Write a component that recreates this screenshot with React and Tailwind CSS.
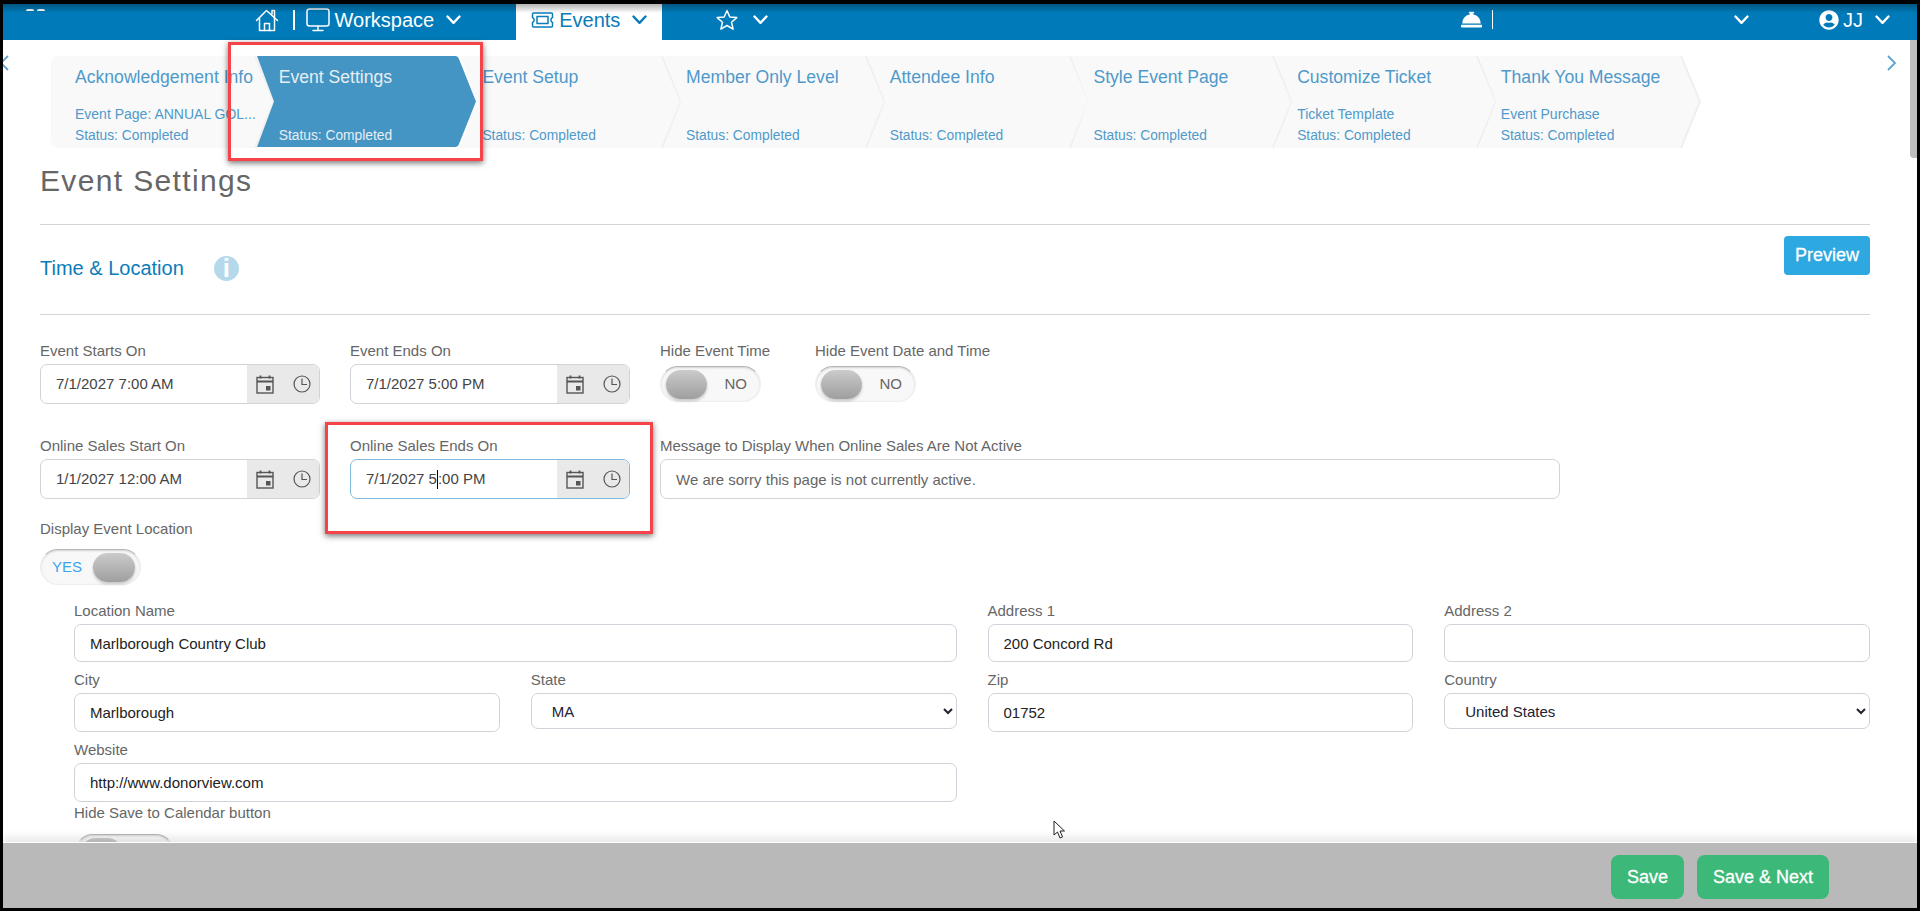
import React from "react";
import { FaConciergeBell, FaUserCircle } from "react-icons/fa";

const Chevron = ({ className = "", color = "#fff" }) => (
  <svg className={className} width="15" height="10" viewBox="0 0 15 10" fill="none">
    <path d="M1.5 1.5 7.5 7.8 13.5 1.5" stroke={color} strokeWidth="2.4" strokeLinecap="round" strokeLinejoin="round" />
  </svg>
);

const Home = () => (
  <svg width="24" height="24" viewBox="0 0 24 24" fill="none" stroke="#fff" strokeWidth="1.5" strokeLinejoin="round" strokeLinecap="round">
    <path d="M1.5 12.5 11.5 2.5 22.5 12.5" />
    <path d="M4.5 10v12.5h15V10" />
    <path d="M9.5 22.5v-7h5v7" />
    <path d="M17 6V2.5h2.5V9" />
  </svg>
);

const Monitor = () => (
  <svg width="24" height="24" viewBox="0 0 24 24" fill="none" stroke="#fff" strokeWidth="1.5" strokeLinecap="round" strokeLinejoin="round">
    <rect x="1" y="1" width="22" height="17" rx="2.5" />
    <path d="M12 18v4M7 22.5h10" />
  </svg>
);

const Ticket = () => (
  <svg width="23" height="16" viewBox="0 0 23 16" fill="none" stroke="#0a7cb8" strokeWidth="1.5" strokeLinejoin="round">
    <path d="M2.5 1h18q1 0 1 1v3.5q-1.6.6-1.6 2.5t1.6 2.5V14q0 1-1 1h-18q-1 0-1-1v-3.5Q3.100 9.900 3.100 8T1.500 5.500V2q0-1 1-1Z" />
    <rect x="6" y="4.500" width="11" height="7" />
  </svg>
);

const Star = () => (
  <svg width="22" height="22" viewBox="0 0 22 22" fill="none" stroke="#fff" strokeWidth="1.5" strokeLinejoin="round">
    <path d="M11 1.500 13.800 8 20.800 8.600 15.500 13.200 17.100 20.200 11 16.500 4.900 20.200 6.500 13.200 1.200 8.600 8.200 8Z" />
  </svg>
);

const Calendar = () => (
  <svg width="18" height="19" viewBox="0 0 18 19" fill="none">
    <rect x="1" y="2.500" width="16" height="15.500" fill="none" stroke="#555" strokeWidth="1.400" />
    <path d="M1 6.500h16" stroke="#555" strokeWidth="1.800" />
    <path d="M4.500 0.500v3M13.500 0.500v3" stroke="#555" strokeWidth="1.800" />
    <rect x="10" y="11" width="4.500" height="4.500" fill="#555" />
  </svg>
);

const Clock = () => (
  <svg width="18" height="18" viewBox="0 0 18 18" fill="none" stroke="#555" strokeWidth="1.200">
    <circle cx="9" cy="9" r="8" />
    <path d="M9 3.500V9.500H14" />
  </svg>
);

const Step = ({ title, sub, active, first }) => (
  <div className={`relative w-[203.7px] h-[93px] shrink-0 ${active ? "z-10" : ""}`}>
    <svg className="absolute left-0 top-0 overflow-visible" width="224" height="93" viewBox="0 0 224 93">
      {first ? (
        <>
          <path d="M8 1H204L223 46.500 204 93H8Q0 93 0 85V9Q0 1 8 1Z" fill="#f9f9f9" />
          <path d="M204 1L223 46.500 204 93" fill="none" stroke="#f0f0f0" strokeWidth="2" />
        </>
      ) : active ? (
        <path d="M2 1H200Q203 1 204 4L221 46.500 204 89Q203 92 200 92H2L19 46.500Z" fill="#4495c3" />
      ) : (
        <>
          <path d="M2 1H204L223 46.500 204 93H2L19 46.500Z" fill="#f9f9f9" />
          <path d="M204 1L223 46.500 204 93" fill="none" stroke="#f0f0f0" strokeWidth="2" />
        </>
      )}
    </svg>
    <div className={`relative h-full pl-[24px] ${active ? "text-[#e6eef3]" : "text-[#4f9aca]"}`}>
      <div className="pt-[12px] h-[49px] text-[17.6px] leading-[20px] whitespace-nowrap">{title}</div>
      <div className="h-[21px] text-[14px] leading-[21px] whitespace-nowrap">{sub}</div>
      <div className="h-[21px] text-[13.8px] leading-[21px] whitespace-nowrap">Status: Completed</div>
    </div>
  </div>
);

const Label = ({ children, className = "" }) => (
  <div className={`h-[17px] leading-[15px] text-[15px] text-[#666] whitespace-nowrap ${className}`}>{children}</div>
);

const DateInput = ({ label, value, focused }) => (
  <div className="w-[280px] shrink-0">
    <Label className="mb-[4px]">{label}</Label>
    <div className={`flex h-[40px] rounded-[7px] overflow-hidden border ${focused ? "border-[#7fb9de]" : "border-[#ced4da]"}`}>
      <div className="flex-1 flex items-center pl-[15px] text-[15px] text-[#444] whitespace-pre">
        {focused ? (
          <>
            {value.slice(0, 10)}
            <span className="inline-block w-0 h-[19px] border-l border-black" />
            {value.slice(10)}
          </>
        ) : (
          value
        )}
      </div>
      <div className="w-[72px] bg-[#e9e9e9] flex items-center pl-[9px] gap-[19px] shrink-0">
        <Calendar />
        <Clock />
      </div>
    </div>
  </div>
);

const Toggle = ({ on, className = "" }) => (
  <div className={`h-[36px] rounded-full bg-[#f8f8f8] border border-[#eee] border-t-[#b5b5b5] shadow-[inset_0_1px_2px_rgba(0,0,0,0.15)] flex items-center px-[5px] justify-between text-[15px] ${className}`}>
    {on ? (
      <>
        <span className="pl-[6px] text-[#3ba4ee]">YES</span>
        <span className="w-[42px] h-[29px] rounded-full bg-gradient-to-b from-[#cbcbcb] to-[#9f9f9f] shadow-[0_2px_3px_rgba(0,0,0,0.2)]" />
      </>
    ) : (
      <>
        <span className="w-[41px] h-[29px] rounded-full bg-gradient-to-b from-[#cbcbcb] to-[#9f9f9f] shadow-[0_2px_3px_rgba(0,0,0,0.2)]" />
        <span className="pr-[8px] text-[#666]">NO</span>
      </>
    )}
  </div>
);

const TextField = ({ label, value, h = "h-[39px]", gap = "mb-[4px]", className = "" }) => (
  <div className={className}>
    <Label className={gap}>{label}</Label>
    <input
      readOnly
      value={value}
      className={`block w-full ${h} rounded-[7px] border border-[#ced4da] bg-white pl-[15px] text-[15px] text-[#222] outline-none`}
    />
  </div>
);

const SelectField = ({ label, value, className = "" }) => (
  <div className={className}>
    <Label className="mb-[4px]">{label}</Label>
    <select
      value={value}
      onChange={() => {}}
      className="block w-full h-[36px] rounded-[7px] border border-[#ced4da] bg-white pl-[16px] text-[15px] text-[#223] outline-none"
    >
      <option>{value}</option>
    </select>
  </div>
);

const steps = [
  { title: "Acknowledgement Info", sub: "Event Page: ANNUAL GOL...", first: true },
  { title: "Event Settings", sub: "", active: true },
  { title: "Event Setup", sub: "" },
  { title: "Member Only Level", sub: "" },
  { title: "Attendee Info", sub: "" },
  { title: "Style Event Page", sub: "" },
  { title: "Customize Ticket", sub: "Ticket Template" },
  { title: "Thank You Message", sub: "Event Purchase" },
];

export default function App() {
  return (
    <div className="relative w-[1920px] h-[911px] overflow-hidden bg-black pt-[4px] px-[3px] pb-[3px] flex flex-col font-['Liberation_Sans',Arial,sans-serif]">
      {/* Top bar */}
      <header className="relative h-[36px] shrink-0 bg-[#007ab8] flex items-stretch pl-[252px] pr-[27px] text-white">
        <span className="absolute left-[23px] top-[5px] w-[8px] h-[2px] rounded-t-full bg-white" />
        <span className="absolute left-[34px] top-[5px] w-[8px] h-[2px] rounded-t-full bg-white" />
        <div className="flex items-center pb-[5px]">
          <Home />
          <span className="ml-[14px] w-[1.500px] h-[20px] bg-white" />
          <span className="ml-[11px]"><Monitor /></span>
          <span className="ml-[5px] text-[20px]">Workspace</span>
          <Chevron className="ml-[12px]" />
        </div>
        <div className="ml-[55px] w-[146px] bg-white flex items-center pl-[15px] pb-[5px] text-[#0a7cb8]">
          <Ticket />
          <span className="ml-[5px] text-[20px]">Events</span>
          <Chevron className="ml-[12px]" color="#0a7cb8" />
        </div>
        <div className="ml-[54px] flex items-center pb-[5px]">
          <Star />
          <Chevron className="ml-[15px]" />
        </div>
        <div className="ml-auto flex items-center pb-[5px]">
          <FaConciergeBell size={21} />
          <span className="ml-[10px] w-[1.500px] h-[19px] bg-white" />
          <Chevron className="ml-[241px]" />
          <FaUserCircle size={20} className="ml-[70px]" />
          <span className="ml-[4px] text-[20px]">JJ</span>
          <Chevron className="ml-[12px]" />
        </div>
        <div className="absolute inset-x-0 top-0 h-[9px] bg-gradient-to-b from-black/30 to-transparent" />
      </header>

      {/* Page */}
      <main className="relative flex-1 min-h-0 overflow-hidden bg-white">
        <svg className="absolute left-[-3px] top-[15px]" width="9" height="16" viewBox="0 0 9 16" fill="none">
          <path d="M8 1 1 8l7 7" stroke="#5ba3d0" strokeWidth="1.800" />
        </svg>
        <svg className="absolute left-[1884px] top-[15px]" width="9" height="16" viewBox="0 0 9 16" fill="none">
          <path d="M1 1l7 7-7 7" stroke="#5ba3d0" strokeWidth="1.800" />
        </svg>
        <div className="absolute right-0 top-0 w-[7px] h-[118px] rounded-bl-[4px] bg-[#bdbdbd]" />

        <div className="flex ml-[48px] mt-[15px] h-[93px]">
          {steps.map((s) => (
            <Step key={s.title} {...s} />
          ))}
        </div>

        <div className="pl-[37px] pr-[47px]">
          <div className="h-[77px] pt-[15px] border-b border-[#d5d5d5]">
            <h1 className="text-[30px] leading-[36px] tracking-[1.35px] text-[#666]">Event Settings</h1>
          </div>

          <div className="h-[90px] border-b border-[#d5d5d5] flex justify-between">
            <div className="flex items-center h-[28px] mt-[29px]">
              <span className="text-[20px] text-[#0a7cb8]">Time &amp; Location</span>
              <span className="ml-[30px] w-[25px] h-[25px] rounded-full bg-[#b5d8ea] flex items-center justify-center text-white text-[26px] leading-none font-bold">i</span>
            </div>
            <button className="mt-[11px] w-[86px] h-[39px] rounded-[4px] bg-[#2ea8e0] text-white text-[18px] [-webkit-text-stroke:0.3px_white]">Preview</button>
          </div>

          <div className="flex gap-[30px] mt-[28px]">
            <DateInput label="Event Starts On" value="7/1/2027 7:00 AM" />
            <DateInput label="Event Ends On" value="7/1/2027 5:00 PM" />
            <div className="w-[125px] shrink-0">
              <Label className="mb-[6px]">Hide Event Time</Label>
              <Toggle className="w-[101px]" />
            </div>
            <div className="shrink-0">
              <Label className="mb-[6px]">Hide Event Date and Time</Label>
              <Toggle className="w-[101px]" />
            </div>
          </div>

          <div className="flex gap-[30px] mt-[34px]">
            <DateInput label="Online Sales Start On" value="1/1/2027 12:00 AM" />
            <DateInput label="Online Sales Ends On" value="7/1/2027 5:00 PM" focused />
            <div className="w-[900px] shrink-0">
              <Label className="mb-[4px]">Message to Display When Online Sales Are Not Active</Label>
              <input
                readOnly
                value="We are sorry this page is not currently active."
                className="block w-full h-[40px] rounded-[7px] border border-[#ced4da] pl-[15px] text-[15px] text-[#666] outline-none"
              />
            </div>
          </div>

          <div className="mt-[22px]">
            <Label className="mb-[11px]">Display Event Location</Label>
            <Toggle on className="w-[101px]" />
          </div>

          <div className="pl-[34px] mt-[18px] grid grid-cols-4 gap-x-[31px] items-start">
            <TextField className="col-span-2" label="Location Name" value="Marlborough Country Club" h="h-[38px]" />
            <TextField label="Address 1" value="200 Concord Rd" h="h-[38px]" />
            <TextField label="Address 2" value="" h="h-[38px]" />

            <TextField className="mt-[10px]" label="City" value="Marlborough" />
            <SelectField className="mt-[10px]" label="State" value="MA" />
            <TextField className="mt-[10px]" label="Zip" value="01752" />
            <SelectField className="mt-[10px]" label="Country" value="United States" />

            <TextField className="col-span-2 mt-[10px]" label="Website" value="http://www.donorview.com" />
            <div className="col-span-2" />

            <div className="col-span-4 mt-[3px]">
              <Label className="mb-[12px]">Hide Save to Calendar button</Label>
              <Toggle className="w-[99px] ml-[1px]" />
            </div>
          </div>
        </div>
      </main>

      {/* Footer */}
      <footer className="relative z-10 h-[66px] shrink-0 bg-[#b9b9b9] border-t border-white shadow-[0_-5px_8px_rgba(0,0,0,0.09)] flex justify-end items-start gap-[13px] pt-[12px] pr-[88px]">
        <button className="w-[73px] h-[44px] rounded-[8px] bg-[#3cb878] text-white text-[18px] [-webkit-text-stroke:0.3px_white]">Save</button>
        <button className="w-[132px] h-[44px] rounded-[8px] bg-[#3cb878] text-white text-[18px] [-webkit-text-stroke:0.3px_white]">Save &amp; Next</button>
      </footer>

      {/* Mouse pointer */}
      <svg className="absolute left-[1053px] top-[820px] z-20" width="13" height="20" viewBox="0 0 13 20">
        <path d="M1 1v14l3.500-3 2.500 6 2.500-1-2.500-6h4.500Z" fill="#fff" stroke="#222" strokeWidth="1" />
      </svg>

      {/* Annotation boxes */}
      <div className="absolute left-[228px] top-[42px] w-[255px] h-[119px] border-[3px] border-[#f5434a] shadow-[0_2px_6px_rgba(0,0,0,0.55)] z-20" />
      <div className="absolute left-[325px] top-[422px] w-[328px] h-[112px] border-[3px] border-[#f5434a] shadow-[0_2px_6px_rgba(0,0,0,0.55)] z-20" />
    </div>
  );
}
